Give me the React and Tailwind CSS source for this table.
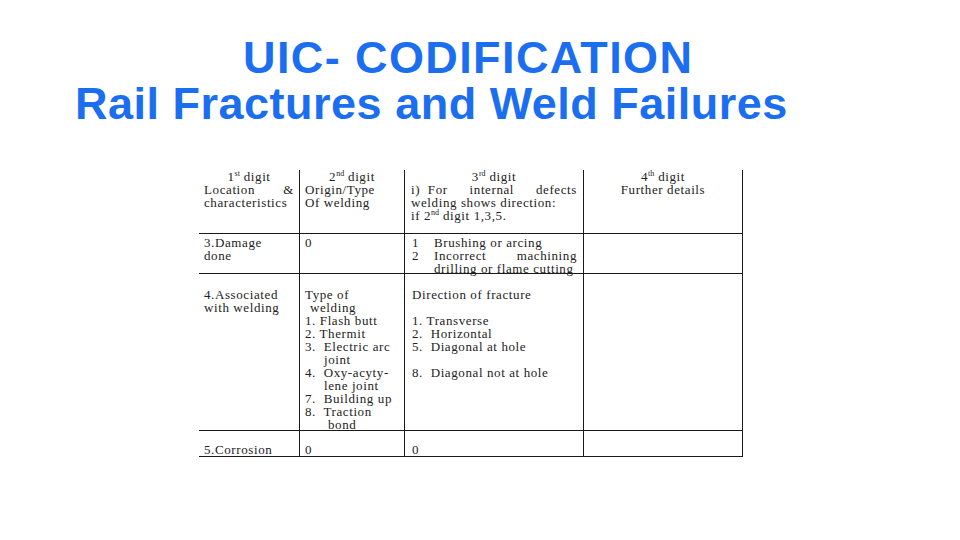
import React from 'react';

const serif = { fontFamily: '"Liberation Serif", "Times New Roman", serif' };

const Sup = ({ children }) => (
  <span className="relative -top-[5px] text-[8px] leading-none tracking-normal">{children}</span>
);

const L = ({ className = '', children }) => (
  <div className={`whitespace-pre leading-[13px] ${className}`}>{children}</div>
);

const Spread = ({ words, className = '' }) => (
  <div className={`flex justify-between leading-[13px] ${className}`}>
    {words.map((w, i) => (
      <span key={i} className="whitespace-pre">{w}</span>
    ))}
  </div>
);

const Cell = ({ className = '', children }) => (
  <div className={`border-r border-b border-[#1a1a1a] ${className}`}>{children}</div>
);

export default function App() {
  return (
    <div className="w-[960px] h-[540px] bg-white overflow-hidden relative">
      <div
        className="pt-[35px] text-[45px] leading-[46px] font-bold text-[#1b6ef0]"
        style={{ fontFamily: '"Liberation Sans", Arial, sans-serif' }}
      >
        <div className="pl-[243px] tracking-[1.4px]">UIC- CODIFICATION</div>
        <div className="pl-[75px] tracking-[0.5px]">Rail Fractures and Weld Failures</div>
      </div>

      <div
        className="ml-[199px] mt-[43px] w-[544px] grid grid-cols-[101px_105px_179px_159px] grid-rows-[64px_40px_157px_26px] text-[13px] tracking-[0.6px] text-[#222]"
        style={serif}
      >
        {/* header row */}
        <Cell className="px-[5px]">
          <L className="text-center">1<Sup>st</Sup> digit</L>
          <Spread words={['Location', '&']} />
          <L>characteristics</L>
        </Cell>
        <Cell className="px-[5px]">
          <L className="text-center">2<Sup>nd</Sup> digit</L>
          <L>Origin/Type</L>
          <L>Of welding</L>
        </Cell>
        <Cell className="pl-[6px] pr-[6px]">
          <L className="text-center">3<Sup>rd</Sup> digit</L>
          <Spread words={['i)  For', 'internal', 'defects']} />
          <L>welding shows direction:</L>
          <L>if 2<Sup>nd</Sup> digit 1,3,5.</L>
        </Cell>
        <Cell className="px-[5px]">
          <L className="text-center">4<Sup>th</Sup> digit</L>
          <L className="text-center">Further details</L>
        </Cell>

        {/* damage done */}
        <Cell className="px-[5px] pt-[2px]">
          <L>3.Damage</L>
          <L>done</L>
        </Cell>
        <Cell className="px-[5px] pt-[2px]">
          <L>0</L>
        </Cell>
        <Cell className="pl-[7px] pr-[6px] pt-[2px]">
          <div className="flex leading-[13px]">
            <span className="w-[22px]">1</span>
            <span>Brushing or arcing</span>
          </div>
          <div className="flex leading-[13px]">
            <span className="w-[22px] shrink-0">2</span>
            <span className="flex-1 flex justify-between">
              <span>Incorrect</span>
              <span>machining</span>
            </span>
          </div>
          <L className="pl-[22px]">drilling or flame cutting</L>
        </Cell>
        <Cell />

        {/* associated with welding */}
        <Cell className="px-[5px] pt-[14px]">
          <L>4.Associated</L>
          <L>with welding</L>
        </Cell>
        <Cell className="px-[5px] pt-[14px]">
          <L>Type of</L>
          <L className="pl-[5px]">welding</L>
          <L>1. Flash butt</L>
          <L>2. Thermit</L>
          <L>3.  Electric arc</L>
          <L className="pl-[19px]">joint</L>
          <L>4.  Oxy-acyty-</L>
          <L className="pl-[19px]">lene joint</L>
          <L>7.  Building up</L>
          <L>8.  Traction</L>
          <L className="pl-[23px]">bond</L>
        </Cell>
        <Cell className="px-[7px] pt-[14px]">
          <L>Direction of fracture</L>
          <L> </L>
          <L>1. Transverse</L>
          <L>2.  Horizontal</L>
          <L>5.  Diagonal at hole</L>
          <L> </L>
          <L>8.  Diagonal not at hole</L>
        </Cell>
        <Cell />

        {/* corrosion */}
        <Cell className="px-[5px] pt-[12px]">
          <L>5.Corrosion</L>
        </Cell>
        <Cell className="px-[5px] pt-[12px]">
          <L>0</L>
        </Cell>
        <Cell className="px-[7px] pt-[12px]">
          <L>0</L>
        </Cell>
        <Cell />
      </div>
    </div>
  );
}
